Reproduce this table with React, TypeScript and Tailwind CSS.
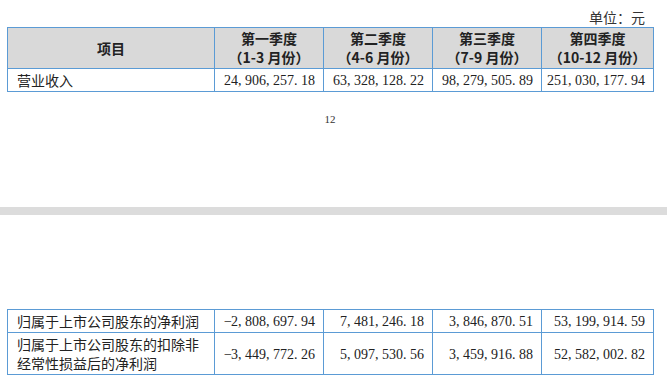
import React from "react";

const cjk = "font-['Noto_Sans_CJK_SC',sans-serif]";
const serif = "font-['Liberation_Serif','Noto_Sans_CJK_SC',serif]";

const quarters = [
    { title: "第一季度", range: "（1-3 月份）" },
    { title: "第二季度", range: "（4-6 月份）" },
    { title: "第三季度", range: "（7-9 月份）" },
    { title: "第四季度", range: "（10-12 月份）" },
];

// each glyph gets a 7px slot, like the half-width cells of the original
function Num({ value }: { value: string }) {
    return (
        <span className={`${serif} text-[14px] whitespace-nowrap`}>
            {value.split("").map((c, i) => (
                <span key={i} className="inline-block w-[7px] text-left">
                    {c}
                </span>
            ))}
        </span>
    );
}

function Cols() {
    return (
        <colgroup>
            <col className="w-[207px]" />
            <col className="w-[109px]" />
            <col className="w-[109px]" />
            <col className="w-[109px]" />
            <col className="w-[112px]" />
        </colgroup>
    );
}

const cell = "border border-[#5b9bd5] p-0";

export default function App() {
    return (
        <div className="w-[667px] h-[384px] bg-white overflow-hidden text-[#222]">
            <div className="pl-[7px] pr-[13px]">
                <div className={`${cjk} h-[27px] flex items-end justify-end pr-[9px] text-[14px] leading-[20px] text-[#333]`}>
                    单位：元
                </div>
                <table className="table-fixed border-collapse w-[647px]">
                    <Cols />
                    <tbody>
                        <tr className="h-[41px] bg-[#d9d9d9]">
                            <td className={`${cell} ${cjk} text-center font-bold text-[14px]`}>项目</td>
                            {quarters.map((q) => (
                                <td key={q.title} className={`${cell} ${cjk} text-center font-bold text-[14px] leading-[19px]`}>
                                    <div>{q.title}</div>
                                    <div>{q.range}</div>
                                </td>
                            ))}
                        </tr>
                        <tr className="h-[22px]">
                            <td className={`${cell} ${cjk} text-[14px] leading-[20px] pl-[9px]`}>营业收入</td>
                            {["24,906,257.18", "63,328,128.22", "98,279,505.89", "251,030,177.94"].map((v) => (
                                <td key={v} className={`${cell} text-right pr-[8px] leading-[20px]`}>
                                    <Num value={v} />
                                </td>
                            ))}
                        </tr>
                    </tbody>
                </table>
            </div>

            <div className="h-[115px] flex justify-center pt-[20px] pr-[7px]">
                <span className={`${serif} text-[11px] leading-[14px] text-[#333]`}>12</span>
            </div>

            <div className="h-[8px] bg-[#dcdcdc]" />
            <div className="h-[94px]" />

            <div className="pl-[7px] pr-[13px]">
                <table className="table-fixed border-collapse w-[647px]">
                    <Cols />
                    <tbody>
                        <tr className="h-[22px]">
                            <td className={`${cell} ${cjk} text-[14px] leading-[20px] pl-[9px]`}>归属于上市公司股东的净利润</td>
                            {["−2,808,697.94", "7,481,246.18", "3,846,870.51", "53,199,914.59"].map((v) => (
                                <td key={v} className={`${cell} text-right pr-[8px] leading-[20px]`}>
                                    <Num value={v} />
                                </td>
                            ))}
                        </tr>
                        <tr className="h-[42px]">
                            <td className={`${cell} ${cjk} text-[14px] leading-[19px] pl-[9px]`}>
                                <div>归属于上市公司股东的扣除非</div>
                                <div>经常性损益后的净利润</div>
                            </td>
                            {["−3,449,772.26", "5,097,530.56", "3,459,916.88", "52,582,002.82"].map((v) => (
                                <td key={v} className={`${cell} text-right pr-[8px] leading-[20px]`}>
                                    <Num value={v} />
                                </td>
                            ))}
                        </tr>
                    </tbody>
                </table>
            </div>
        </div>
    );
}
